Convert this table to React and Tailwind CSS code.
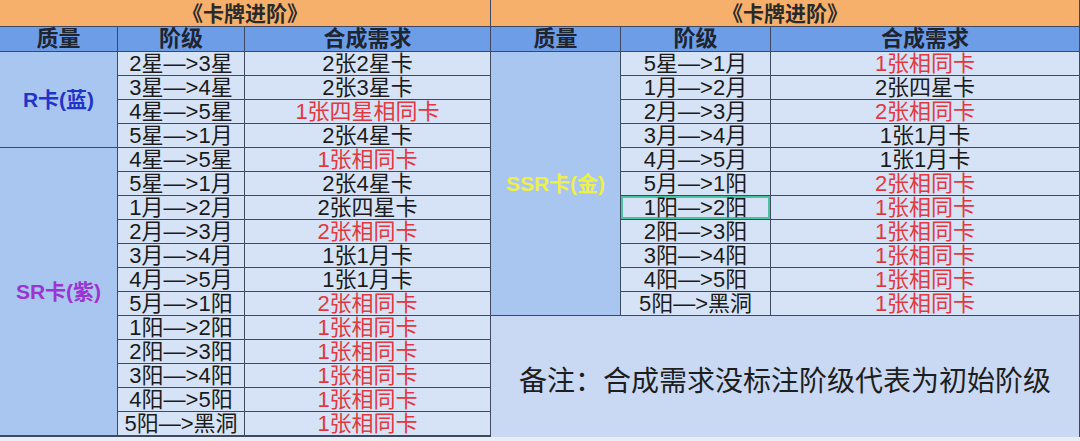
import React from "react";

const font = { fontFamily: '"Liberation Sans", "Noto Sans CJK SC", sans-serif' };

const leftRows = [
  ["2星—>3星", "2张2星卡", false],
  ["3星—>4星", "2张3星卡", false],
  ["4星—>5星", "1张四星相同卡", true],
  ["5星—>1月", "2张4星卡", false],
  ["4星—>5星", "1张相同卡", true],
  ["5星—>1月", "2张4星卡", false],
  ["1月—>2月", "2张四星卡", false],
  ["2月—>3月", "2张相同卡", true],
  ["3月—>4月", "1张1月卡", false],
  ["4月—>5月", "1张1月卡", false],
  ["5月—>1阳", "2张相同卡", true],
  ["1阳—>2阳", "1张相同卡", true],
  ["2阳—>3阳", "1张相同卡", true],
  ["3阳—>4阳", "1张相同卡", true],
  ["4阳—>5阳", "1张相同卡", true],
  ["5阳—>黑洞", "1张相同卡", true],
];

const rightRows = [
  ["5星—>1月", "1张相同卡", true],
  ["1月—>2月", "2张四星卡", false],
  ["2月—>3月", "2张相同卡", true],
  ["3月—>4月", "1张1月卡", false],
  ["4月—>5月", "1张1月卡", false],
  ["5月—>1阳", "2张相同卡", true],
  ["1阳—>2阳", "1张相同卡", true],
  ["2阳—>3阳", "1张相同卡", true],
  ["3阳—>4阳", "1张相同卡", true],
  ["4阳—>5阳", "1张相同卡", true],
  ["5阳—>黑洞", "1张相同卡", true],
];

function Title() {
  return (
    <div className="h-[26px] bg-[#f6b06c] flex items-center justify-center text-[21px] font-bold text-[#2a2a2a] leading-none">
      《卡牌进阶》
    </div>
  );
}

function Header({ cols }) {
  return (
    <div className={`grid ${cols} gap-px h-[24px]`}>
      {["质量", "阶级", "合成需求"].map((t) => (
        <div key={t} className="bg-[#6c9de6] flex items-center justify-center text-[22px] font-bold text-[#1e2430] leading-none">
          {t}
        </div>
      ))}
    </div>
  );
}

function Row({ stage, need, red, boxed }) {
  return (
    <>
      <div className={`bg-[#d6e2f6] flex items-center justify-center text-[22px] text-[#1b1b1b] leading-none ${boxed ? "ring-2 ring-inset ring-[#49c3a0]" : ""}`}>
        {stage}
      </div>
      <div className={`bg-[#d6e2f6] flex items-center justify-center text-[22px] leading-none ${red ? "text-[#e2383f]" : "text-[#1b1b1b]"}`}>
        {need}
      </div>
    </>
  );
}

export default function App() {
  return (
    <div className="w-[1080px] h-[441px] bg-[#e9edf4] overflow-hidden" style={font}>
      <div className="flex gap-px bg-[#3e4961] h-[437px] pr-px">
        {/* left */}
        <div className="w-[490px] flex flex-col gap-px">
          <Title />
          <Header cols="grid-cols-[117px_126px_1fr]" />
          <div className="grid grid-cols-[117px_126px_1fr] grid-rows-[repeat(16,23px)] gap-px">
            <div className="row-span-4 bg-[#a9c6f0] flex items-center justify-center text-[21px] font-bold text-[#2233c9] leading-none">
              R卡(蓝)
            </div>
            {leftRows.slice(0, 4).map((r, i) => (
              <Row key={i} stage={r[0]} need={r[1]} red={r[2]} />
            ))}
            <div className="row-span-12 bg-[#a9c6f0] flex items-center justify-center text-[21px] font-bold text-[#9a34d2] leading-none">
              SR卡(紫)
            </div>
            {leftRows.slice(4).map((r, i) => (
              <Row key={i} stage={r[0]} need={r[1]} red={r[2]} />
            ))}
          </div>
        </div>
        {/* right */}
        <div className="flex-1 flex flex-col gap-px">
          <Title />
          <Header cols="grid-cols-[129px_149px_1fr]" />
          <div className="flex-1 grid grid-cols-[129px_149px_1fr] grid-rows-[repeat(11,23px)_1fr] gap-px">
            <div className="row-span-11 bg-[#a9c6f0] flex items-center justify-center text-[21px] font-bold text-[#eef04a] leading-none">
              SSR卡(金)
            </div>
            {rightRows.map((r, i) => (
              <Row key={i} stage={r[0]} need={r[1]} red={r[2]} boxed={i === 6} />
            ))}
            <div className="col-span-3 bg-[#c9d9f3] flex items-center justify-center text-[28px] text-[#1e1e1e] leading-none pt-[10px]">
              备注：合成需求没标注阶级代表为初始阶级
            </div>
          </div>
        </div>
      </div>
    </div>
  );
}
